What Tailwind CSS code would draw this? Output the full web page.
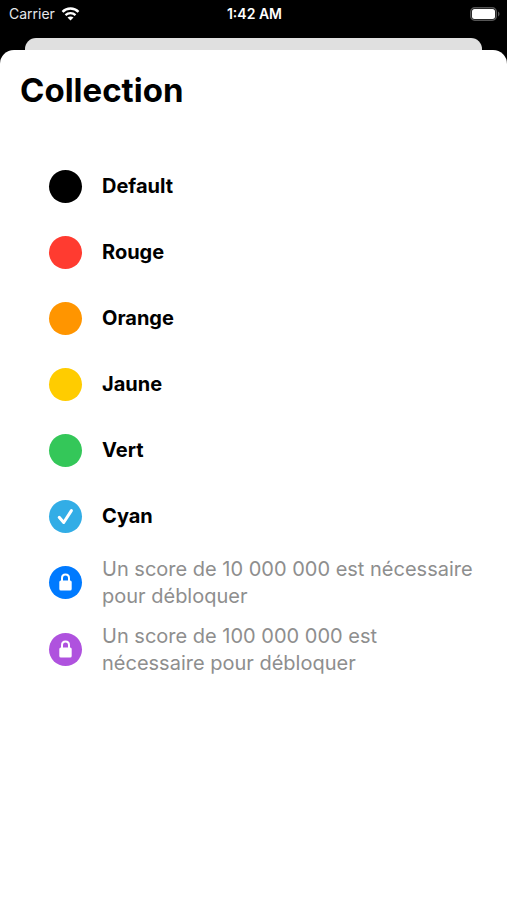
<!DOCTYPE html>
<html lang="fr">
<head>
  <meta charset="UTF-8">
  <meta name="viewport" content="width=device-width, initial-scale=1.0">
  <title>Collection</title>
  <script src="https://cdn.jsdelivr.net/npm/@tailwindcss/browser@4"></script>
</head>
<body class="bg-black min-h-screen flex flex-col font-['Inter','Liberation_Sans',sans-serif] text-black">
  <!-- Status Bar -->
  <header class="grid grid-cols-3 items-center h-7 pl-[9px] pr-[7px] text-white text-sm">
    <div class="flex items-center gap-[6px]">
      <span class="text-gray-200">Carrier</span>
      <svg class="w-[19px] h-[14px]" viewBox="0 0 18 14" fill="none" stroke="#fff" aria-hidden="true">
        <path d="M1 4.9C5.4 0.4 12.6 0.4 17 4.9" stroke-width="2.4"/>
        <path d="M4 8.1C6.8 5.4 11.2 5.4 14 8.1" stroke-width="2.3"/>
        <path d="M9 13.4L6 10.5C7.7 9 10.3 9 12 10.5Z" fill="#fff" stroke="none"/>
      </svg>
    </div>
    <span class="text-center font-semibold">1:42 AM</span>
    <svg class="w-[30px] h-[14px] justify-self-end" viewBox="0 0 30 14" aria-hidden="true">
      <rect x="0.75" y="0.75" width="25.5" height="12.5" rx="4" fill="none" stroke="#555" stroke-width="1.5"/>
      <rect x="2" y="2" width="23" height="10" rx="2.5" fill="#fff"/>
      <path d="M28 4.6C30 5.4 30 8.6 28 9.4Z" fill="#555"/>
    </svg>
  </header>

  <!-- Card behind the sheet -->
  <div class="mt-[10px] mx-[25px] h-3 bg-[#e0e0e0] rounded-t-[11px]"></div>

  <!-- Sheet -->
  <main class="grow bg-white rounded-t-[14px] px-5 pt-5">
    <h1 class="text-[33px] leading-10 font-bold">Collection</h1>

    <ul class="mt-[43px] pl-[29px] pr-2">
      <li>
        <button type="button" class="flex items-center gap-5 w-full h-[66px] text-left">
          <span class="shrink-0 size-[33px] rounded-full bg-black"></span>
          <span class="text-xl font-bold">Default</span>
        </button>
      </li>
      <li>
        <button type="button" class="flex items-center gap-5 w-full h-[66px] text-left">
          <span class="shrink-0 size-[33px] rounded-full bg-[#ff3b30]"></span>
          <span class="text-xl font-bold">Rouge</span>
        </button>
      </li>
      <li>
        <button type="button" class="flex items-center gap-5 w-full h-[66px] text-left">
          <span class="shrink-0 size-[33px] rounded-full bg-[#ff9500]"></span>
          <span class="text-xl font-bold">Orange</span>
        </button>
      </li>
      <li>
        <button type="button" class="flex items-center gap-5 w-full h-[66px] text-left">
          <span class="shrink-0 size-[33px] rounded-full bg-[#ffcc00]"></span>
          <span class="text-xl font-bold">Jaune</span>
        </button>
      </li>
      <li>
        <button type="button" class="flex items-center gap-5 w-full h-[66px] text-left">
          <span class="shrink-0 size-[33px] rounded-full bg-[#34c759]"></span>
          <span class="text-xl font-bold">Vert</span>
        </button>
      </li>
      <li>
        <button type="button" aria-pressed="true" class="flex items-center gap-5 w-full h-[66px] text-left">
          <span class="shrink-0 size-[33px] rounded-full bg-[#32ade6]">
            <svg class="size-[33px]" viewBox="0 0 33 33" fill="none" stroke="#fff" stroke-width="3" stroke-linecap="round" stroke-linejoin="round" aria-hidden="true">
              <path d="M10.2 17.3L14.7 22.5L22.4 10.6"/>
            </svg>
          </span>
          <span class="text-xl font-bold">Cyan</span>
        </button>
      </li>
      <li>
        <button type="button" disabled class="flex items-center gap-5 w-full min-h-[67px] text-left">
          <span class="shrink-0 size-[33px] rounded-full bg-[#007aff]">
            <svg class="size-[33px]" viewBox="0 0 33 33" aria-hidden="true">
              <rect x="10.3" y="14.6" width="12.4" height="10" rx="1.5" fill="#fff"/>
              <path d="M13 16V12.2C13 7.4 20 7.4 20 12.2V16" fill="none" stroke="#fff" stroke-width="2"/>
            </svg>
          </span>
          <span class="text-xl leading-[27px] text-[#8e8e8e]">Un score de 10 000 000 est nécessaire pour débloquer</span>
        </button>
      </li>
      <li>
        <button type="button" disabled class="flex items-center gap-5 w-full min-h-[67px] text-left">
          <span class="shrink-0 size-[33px] rounded-full bg-[#af52de]">
            <svg class="size-[33px]" viewBox="0 0 33 33" aria-hidden="true">
              <rect x="10.3" y="14.6" width="12.4" height="10" rx="1.5" fill="#fff"/>
              <path d="M13 16V12.2C13 7.4 20 7.4 20 12.2V16" fill="none" stroke="#fff" stroke-width="2"/>
            </svg>
          </span>
          <span class="text-xl leading-[27px] text-[#8e8e8e]">Un score de 100 000 000 est nécessaire pour débloquer</span>
        </button>
      </li>
    </ul>
  </main>
</body>
</html>
